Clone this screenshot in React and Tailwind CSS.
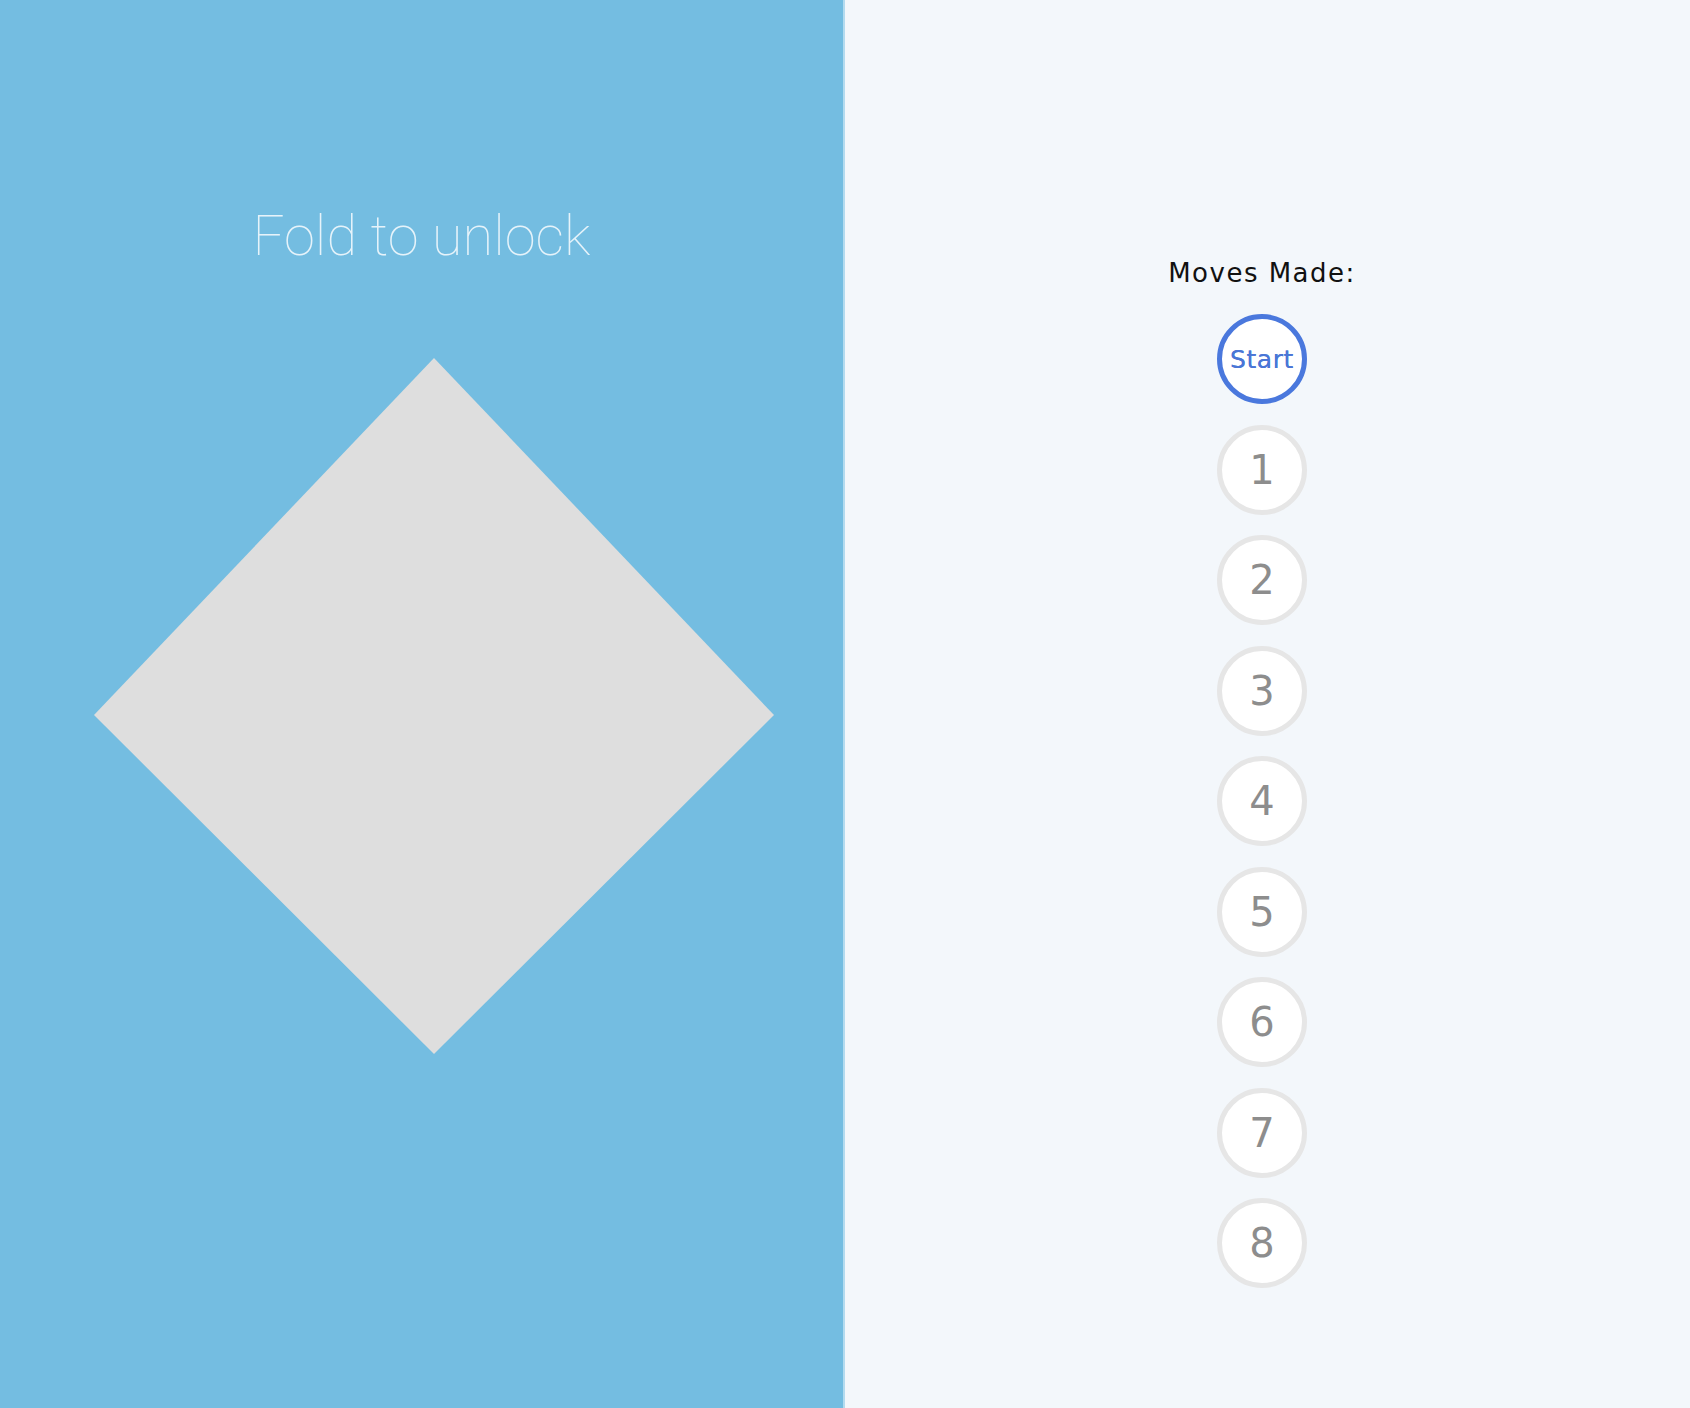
import React from 'react';

const moves = ['1', '2', '3', '4', '5', '6', '7', '8'];

const MoveDot = ({ label, active }) => (
  <div
    className={`flex h-[90px] w-[90px] items-center justify-center rounded-full bg-white ${
      active ? 'border-[5px] border-[#4a78dd]' : 'border-[5px] border-[#e6e6e6]'
    }`}
  >
    {active ? (
      <span className="text-[25px] leading-none tracking-[0.6px] text-[#4a76d6] [text-shadow:0_0_0.4px_#4a76d6]">{label}</span>
    ) : (
      <span className="text-[40px] leading-none text-[#8d8d8d]">{label}</span>
    )}
  </div>
);

export default function App() {
  return (
    <div className="flex h-[1408px] w-full overflow-hidden" style={{ fontFamily: '"DejaVu Sans", "Open Sans", sans-serif' }}>
      {/* paper side */}
      <div className="flex w-[845px] shrink-0 flex-col items-center border-r-2 border-[#b3dbef] bg-[#74bde1]">
        <h1
          className="mt-[202px] text-[56px] font-thin leading-[68px] text-[#e6f3fa]"
          style={{ fontFamily: 'Roboto, "Liberation Sans", sans-serif' }}
        >
          Fold to unlock
        </h1>
        <svg width="843" height="710" viewBox="0 0 843 710" className="mt-[86px]">
          <polygon points="434,2 774,359 434,698 94,359" fill="#dedede" />
        </svg>
      </div>

      {/* moves side */}
      <div className="flex flex-1 flex-col items-center bg-[#f3f7fb] pr-[11px]">
        <p className="mt-[255px] text-[26px] leading-[36px] tracking-[1.5px] text-[#111]">Moves Made:</p>
        <div className="mt-[23px] flex flex-col items-center gap-[20.5px]">
          <MoveDot label="Start" active />
          {moves.map((m) => (
            <MoveDot key={m} label={m} />
          ))}
        </div>
      </div>
    </div>
  );
}
